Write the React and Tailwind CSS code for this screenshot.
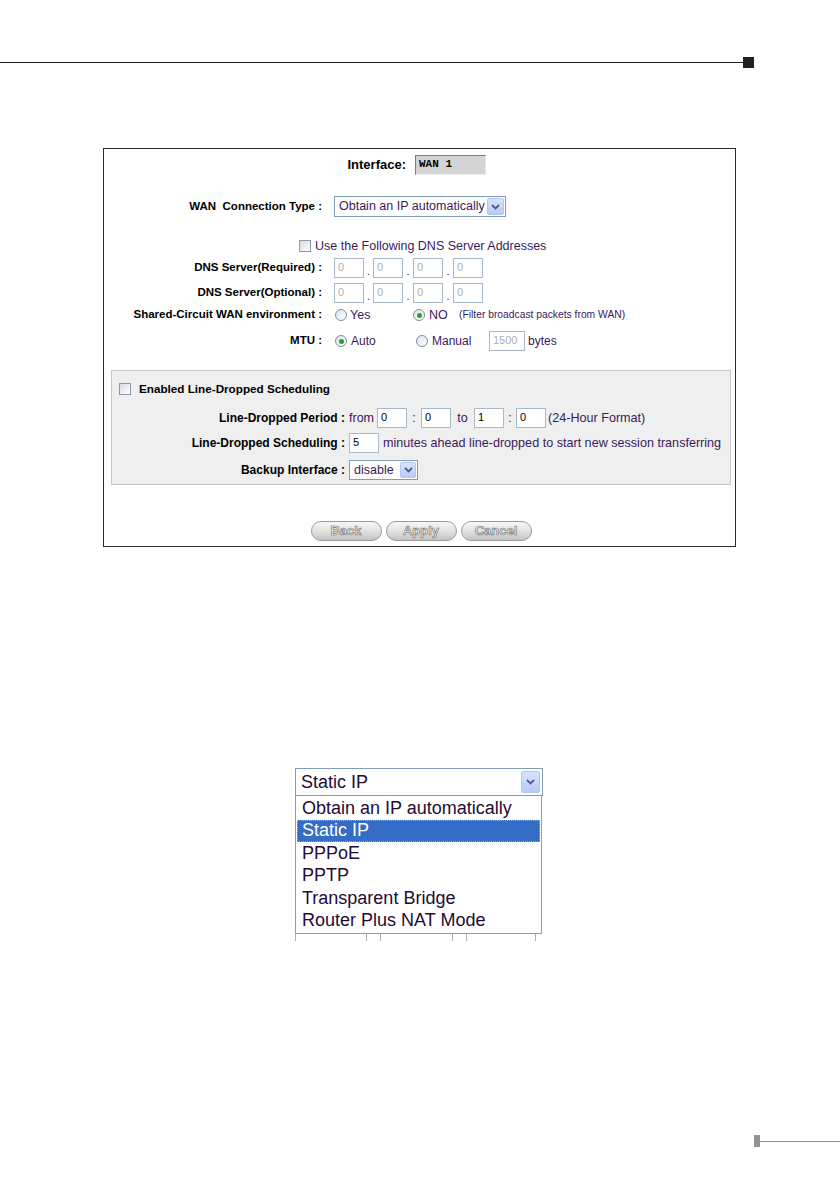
import React from "react";

const V = "text-[#3a1a5c]";

function Chevron() {
  return (
    <svg width="9" height="6" viewBox="0 0 9 6">
      <path d="M1 1 L4.5 4.5 L8 1" fill="none" stroke="#4a5f86" strokeWidth="1.8" />
    </svg>
  );
}

function ArrowBtn({ cls }) {
  return (
    <span className={"flex items-center justify-center border border-[#b4c6ee] bg-linear-to-b from-[#d7e3fd] to-[#b7cbf7] rounded-[2px] " + cls}>
      <Chevron />
    </span>
  );
}

function Checkbox() {
  return <span className="w-[12px] h-[12px] shrink-0 border border-[#8a9bb0] bg-linear-to-br from-[#d8dadd] to-white" />;
}

function Radio({ checked }) {
  return (
    <span className="w-[12px] h-[12px] shrink-0 rounded-full border border-[#7b8ea3] bg-linear-to-br from-[#dde2e8] to-white flex items-center justify-center">
      {checked && <span className="w-[5px] h-[5px] rounded-full bg-[#26a626]" />}
    </span>
  );
}

function Box({ v, w = "w-[30px]", gray }) {
  return (
    <span className={"h-[20px] shrink-0 border border-[#a9b8ca] bg-white text-[11px] leading-[16px] pl-[3px] " + w + (gray ? " text-[#b0b0b0]" : " text-black")}>
      {v}
    </span>
  );
}

function Label({ children, w = "w-[218px]", size = "text-[11.5px]" }) {
  return <span className={"shrink-0 text-right font-bold text-black " + w + " " + size}>{children}</span>;
}

function Btn({ children }) {
  return (
    <span className="w-[71px] h-[20px] rounded-full border border-[#9a9a9a] bg-linear-to-b from-[#f6f6f6] via-[#e2e2e2] to-[#c4c4c4] flex items-center justify-center text-[13px] font-bold text-[#ececec] [-webkit-text-stroke:0.6px_#707070]">
      {children}
    </span>
  );
}

function Dot({ w }) {
  return <span className={"h-[20px] flex items-end justify-center text-[11px] leading-[14px] " + V + " " + w}>.</span>;
}

export default function App() {
  const items = ["Obtain an IP automatically", "Static IP", "PPPoE", "PPTP", "Transparent Bridge", "Router Plus NAT Mode"];
  return (
    <div className="w-[840px] h-[1192px] bg-white overflow-hidden flex flex-col font-['Liberation_Sans',Arial,sans-serif]">
      {/* header rule */}
      <div className="mt-[57px] h-[11px] flex items-center">
        <div className="w-[743px] h-px bg-[#231f20]" />
        <div className="w-[11px] h-[11px] bg-[#231f20]" />
      </div>

      {/* panel */}
      <div className="mt-[80px] ml-[103px] w-[633px] h-[399px] border border-[#2b2b2b] flex flex-col">
        <div className="mt-[6px] h-[20px] flex items-center">
          <Label w="w-[302px]" size="text-[13px]">Interface:</Label>
          <span className="ml-[9px] w-[71px] h-[20px] bg-[#d4d4d4] border-t border-l border-[#7a7a7a] border-r border-b border-r-[#e8e8e8] border-b-[#e8e8e8] font-['Liberation_Mono',monospace] font-bold text-[11px] leading-[17px] pl-[3px] text-black">
            WAN 1
          </span>
        </div>

        <div className="mt-[21px] h-[21px] flex items-center">
          <Label>WAN&nbsp; Connection Type :</Label>
          <span className="ml-[12px] w-[172px] h-[21px] border border-[#7f9db9] bg-white flex items-center justify-between pl-[4px] pr-[1px]">
            <span className={"text-[12.5px] " + V}>Obtain an IP automatically</span>
            <ArrowBtn cls="w-[17px] h-[17px]" />
          </span>
        </div>

        <div className="mt-[22px] h-[14px] flex items-center pl-[195px] gap-[4px]">
          <Checkbox />
          <span className={"text-[12.5px] " + V}>Use the Following DNS Server Addresses</span>
        </div>

        {["DNS Server(Required) :", "DNS Server(Optional) :"].map((l) => (
          <div key={l} className="mt-[5px] h-[20px] flex items-center">
            <Label>{l}</Label>
            <span className="ml-[12px] flex items-center">
              <Box v="0" gray />
              <Dot w="w-[9px]" />
              <Box v="0" gray />
              <Dot w="w-[10px]" />
              <Box v="0" gray />
              <Dot w="w-[10px]" />
              <Box v="0" gray />
            </span>
          </div>
        ))}

        <div className="mt-[2px] h-[20px] flex items-center">
          <Label>Shared-Circuit WAN environment :</Label>
          <span className="ml-[13px] w-[78px] flex items-center gap-[3px]">
            <Radio />
            <span className={"text-[12.5px] " + V}>Yes</span>
          </span>
          <span className="w-[46px] flex items-center gap-[4px]">
            <Radio checked />
            <span className={"text-[12.5px] " + V}>NO</span>
          </span>
          <span className={"text-[10.3px] " + V}>(Filter broadcast packets from WAN)</span>
        </div>

        <div className="mt-[6px] h-[20px] flex items-center">
          <Label>MTU :</Label>
          <span className="ml-[13px] w-[81px] flex items-center gap-[4px]">
            <Radio checked />
            <span className={"text-[12px] " + V}>Auto</span>
          </span>
          <span className="w-[73px] flex items-center gap-[4px]">
            <Radio />
            <span className={"text-[12px] " + V}>Manual</span>
          </span>
          <Box v="1500" w="w-[36px]" gray />
          <span className={"ml-[3px] text-[12px] " + V}>bytes</span>
        </div>

        {/* gray box */}
        <div className="mt-[19px] ml-[7px] w-[620px] h-[115px] border border-[#c3c8cf] bg-[#efefef] flex flex-col">
          <div className="mt-[11px] h-[14px] flex items-center pl-[7px] gap-[8px]">
            <Checkbox />
            <span className="text-[11.7px] font-bold text-black">Enabled Line-Dropped Scheduling</span>
          </div>
          <div className="mt-[12px] h-[20px] flex items-center">
            <Label w="w-[233px]" size="text-[12px]">Line-Dropped Period :</Label>
            <span className={"ml-[4px] w-[28px] text-[12.5px] " + V}>from</span>
            <Box v="0" />
            <span className={"w-[14px] text-center text-[12px] " + V}>:</span>
            <Box v="0" />
            <span className={"w-[23px] text-center text-[12.5px] " + V}>to</span>
            <Box v="1" />
            <span className={"w-[12px] text-center text-[12px] " + V}>:</span>
            <Box v="0" />
            <span className={"ml-[2px] text-[12.6px] " + V}>(24-Hour Format)</span>
          </div>
          <div className="mt-[5px] h-[20px] flex items-center">
            <Label w="w-[233px]" size="text-[12px]">Line-Dropped Scheduling :</Label>
            <span className="ml-[4px] flex">
              <Box v="5" />
            </span>
            <span className={"ml-[4px] text-[12.6px] " + V}>minutes ahead line-dropped to start new session transferring</span>
          </div>
          <div className="mt-[7px] h-[20px] flex items-center">
            <Label w="w-[233px]" size="text-[12px]">Backup Interface :</Label>
            <span className="ml-[4px] w-[69px] h-[20px] border border-[#7f9db9] bg-white flex items-center justify-between pl-[4px] pr-px">
              <span className={"text-[12.5px] " + V}>disable</span>
              <ArrowBtn cls="w-[16px] h-[16px]" />
            </span>
          </div>
        </div>

        <div className="mt-[36px] h-[20px] flex justify-center gap-[4px] pl-[3px]">
          <Btn>Back</Btn>
          <Btn>Apply</Btn>
          <Btn>Cancel</Btn>
        </div>
      </div>

      {/* dropdown */}
      <div className="mt-[221px] ml-[295px] w-[248px] flex flex-col">
        <div className="h-[28px] border border-[#7f9db9] bg-white flex items-center justify-between pl-[5px] pr-[2px]">
          <span className="text-[18px] text-[#240b36]">Static IP</span>
          <ArrowBtn cls="w-[19px] h-[22px]" />
        </div>
        <div className="w-[247px] h-[138px] border-x border-b border-[#8d9db0] bg-white flex flex-col px-px pt-px">
          {items.map((t, i) => (
            <div
              key={t}
              className={
                "h-[22.5px] flex items-center pl-[5px] text-[18px] " +
                (i === 1 ? "bg-[#346cc6] text-white outline-1 outline-dotted outline-[#c9a86a] -outline-offset-1" : "text-[#240b36]")
              }
            >
              {t}
            </div>
          ))}
        </div>
        <div className="h-[7px] flex">
          <span className="w-px h-full bg-[#a7b0bb]" />
          <span className="ml-[70px] w-px h-full bg-[#a7b0bb]" />
          <span className="ml-[13px] w-px h-full bg-[#a7b0bb]" />
          <span className="ml-[71px] w-px h-full bg-[#a7b0bb]" />
          <span className="ml-[13px] w-px h-full bg-[#a7b0bb]" />
          <span className="ml-[68px] w-px h-full bg-[#a7b0bb]" />
        </div>
      </div>

      {/* footer rule */}
      <div className="mt-[194px] h-[12px] flex items-center">
        <div className="ml-[754px] w-[6px] h-[12px] bg-[#939393]" />
        <div className="flex-1 h-px bg-[#939393]" />
      </div>
    </div>
  );
}
